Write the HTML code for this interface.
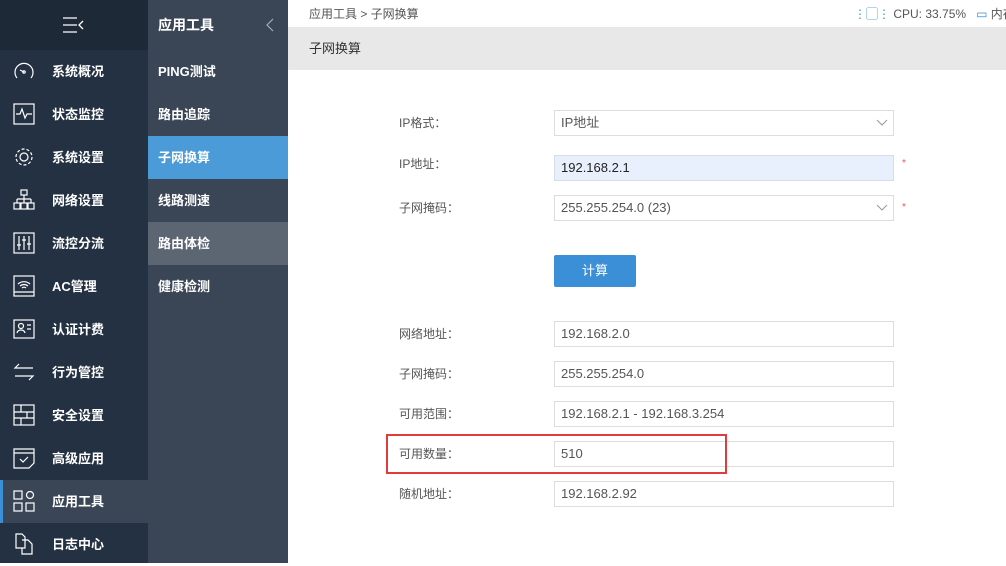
<!DOCTYPE html>
<html><head><meta charset="utf-8"><style>
*{margin:0;padding:0;box-sizing:border-box}
body{width:1006px;height:563px;overflow:hidden;position:relative;background:#fff;font-family:"Liberation Sans","Noto Sans CJK SC",sans-serif;font-size:13px}
.s1{position:absolute;left:0;top:0;width:148px;height:563px;background:#243142}
.s1top{position:absolute;left:0;top:0;width:148px;height:50px;background:#1e2937}
.mi{position:absolute;left:0;width:148px;height:43px;color:#fff;font-size:13px;font-weight:bold}
.mi span{position:absolute;left:52px;top:11px}
.mi svg{position:absolute;left:13px;top:10px}
.s2{position:absolute;left:148px;top:0;width:140px;height:563px;background:#3a4656}
.si{position:absolute;left:0;width:140px;height:43px;color:#fff;font-weight:bold;font-size:13px;padding:11px 0 0 10px}
.main{position:absolute;left:288px;top:0;right:0;bottom:0}
.lab{position:absolute;left:111px;color:#555;font-size:12px}
.inp{position:absolute;left:266px;width:340px;height:26px;border:1px solid #ddd;background:#fff;padding:0 6px;line-height:24px;color:#555;font-size:13px}
.star{position:absolute;left:614px;color:#e55;font-size:10px}
</style></head><body>
<div class="s1"></div><div class="s1top"></div>
<svg style="position:absolute;left:62px;top:16px" width="24" height="18" viewBox="0 0 24 18" fill="none" stroke="#fff" stroke-width="1.3"><path d="M1 2h14M1 9h14M1 16h14M21 5l-4 4 4 4"/></svg>
<div class="mi" style="top:50px"><svg width="22" height="22" viewBox="0 0 22 22" fill="none" stroke="#fff" stroke-width="1.2"><path d="M4 18A9 9 0 1 1 18 18"/><circle cx="11" cy="12" r="1.2"/><path d="M11 12l-4-2"/></svg><span>系统概况</span></div>
<div class="mi" style="top:93px"><svg width="22" height="22" viewBox="0 0 22 22" fill="none" stroke="#fff" stroke-width="1.2"><rect x="1" y="1" width="20" height="20"/><path d="M3 11h4l2-5 3 9 2-4h5"/></svg><span>状态监控</span></div>
<div class="mi" style="top:136px"><svg width="22" height="22" viewBox="0 0 22 22" fill="none" stroke="#fff" stroke-width="1.2"><circle cx="11" cy="11" r="4"/><circle cx="11" cy="11" r="8" stroke-dasharray="3 2"/></svg><span>系统设置</span></div>
<div class="mi" style="top:179px"><svg width="22" height="22" viewBox="0 0 22 22" fill="none" stroke="#fff" stroke-width="1.2"><rect x="8" y="1" width="6" height="5"/><path d="M11 6v4M4 10h14M4 10v4M11 10v4M18 10v4"/><rect x="1" y="14" width="6" height="6"/><rect x="8" y="14" width="6" height="6"/><rect x="15" y="14" width="6" height="6"/></svg><span>网络设置</span></div>
<div class="mi" style="top:222px"><svg width="22" height="22" viewBox="0 0 22 22" fill="none" stroke="#fff" stroke-width="1.2"><rect x="1" y="1" width="20" height="20"/><path d="M6 4v14M11 4v14M16 4v14M4 13h4M9 8h4M14 12h4"/></svg><span>流控分流</span></div>
<div class="mi" style="top:265px"><svg width="22" height="22" viewBox="0 0 22 22" fill="none" stroke="#fff" stroke-width="1.2"><rect x="1" y="1" width="20" height="20"/><path d="M5 9a9 9 0 0 1 12 0M7 11a6 6 0 0 1 8 0M9 13a3 3 0 0 1 4 0M1 17h20"/></svg><span>AC管理</span></div>
<div class="mi" style="top:308px"><svg width="22" height="22" viewBox="0 0 22 22" fill="none" stroke="#fff" stroke-width="1.2"><rect x="1" y="2" width="20" height="18"/><circle cx="8" cy="8" r="2.5"/><path d="M4 15c1-4 7-4 8 0M14 7h4M14 11h4"/></svg><span>认证计费</span></div>
<div class="mi" style="top:351px"><svg width="22" height="22" viewBox="0 0 22 22" fill="none" stroke="#fff" stroke-width="1.2"><path d="M6 3L2 7h18M16 19l4-4H2"/></svg><span>行为管控</span></div>
<div class="mi" style="top:394px"><svg width="22" height="22" viewBox="0 0 22 22" fill="none" stroke="#fff" stroke-width="1.2"><rect x="1" y="1" width="20" height="20"/><path d="M1 8h20M1 14h20M8 1v7M14 8v6M8 14v7"/></svg><span>安全设置</span></div>
<div class="mi" style="top:437px"><svg width="22" height="22" viewBox="0 0 22 22" fill="none" stroke="#fff" stroke-width="1.2"><path d="M1 2h20v14l-5 5H1zM1 6h20M7 12l3 3 5-5"/></svg><span>高级应用</span></div>
<div class="mi" style="top:480px;background:#3a4656;border-left:3px solid #3b8fd6"><svg style="left:10px" width="22" height="22" viewBox="0 0 22 22" fill="none" stroke="#fff" stroke-width="1.2"><rect x="1" y="1" width="8" height="8"/><rect x="1" y="13" width="8" height="8"/><rect x="13" y="13" width="8" height="8"/><circle cx="17" cy="5" r="3.5"/></svg><span style="left:49px">应用工具</span></div>
<div class="mi" style="top:523px"><svg width="22" height="22" viewBox="0 0 22 22" fill="none" stroke="#fff" stroke-width="1.2"><path d="M3 1h6l3 3v11H3zM9 7h6l4 4v10H9v-6"/></svg><span>日志中心</span></div>

<div class="s2"></div>
<div style="position:absolute;left:158px;top:15px;color:#fff;font-size:14px;font-weight:bold">应用工具</div>
<svg style="position:absolute;left:266px;top:18px" width="8" height="14" viewBox="0 0 8 14" fill="none" stroke="#aab" stroke-width="1.2"><path d="M7 1L1 7l6 6"/></svg>
<div style="position:absolute;left:148px;top:0">
<div class="si" style="top:50px">PING测试</div>
<div class="si" style="top:93px">路由追踪</div>
<div class="si" style="top:136px;background:#4a9bd8">子网换算</div>
<div class="si" style="top:179px">线路测速</div>
<div class="si" style="top:222px;background:#5c6672">路由体检</div>
<div class="si" style="top:265px">健康检测</div>
</div>

<div class="main">
<div style="position:absolute;left:21px;top:5px;color:#555;font-size:12px">应用工具 &gt; 子网换算</div>
<div style="position:absolute;left:566px;top:5px;color:#555;font-size:12px;white-space:nowrap"><span style="color:#3b8fd6">⋮▢⋮</span> CPU: 33.75% &nbsp;&nbsp;<span style="color:#3b8fd6">▭</span> 内存</div>
<div style="position:absolute;left:0;top:27px;width:718px;height:43px;background:#e8e8e8;color:#333;font-size:13px;padding:11px 0 0 21px">子网换算</div>

<div class="lab" style="top:114px">IP格式：</div>
<div class="inp" style="top:110px">IP地址<svg style="position:absolute;right:5px;top:8px" width="12" height="8" viewBox="0 0 12 8" fill="none" stroke="#999"><path d="M1 1l5 5 5-5"/></svg></div>
<div class="lab" style="top:155px">IP地址：</div>
<div class="inp" style="top:155px;background:#e8f0fe;border-color:#d8dde5;color:#222">192.168.2.1</div>
<div class="star" style="top:158px">*</div>
<div class="lab" style="top:199px">子网掩码：</div>
<div class="inp" style="top:195px">255.255.254.0 (23)<svg style="position:absolute;right:5px;top:8px" width="12" height="8" viewBox="0 0 12 8" fill="none" stroke="#999"><path d="M1 1l5 5 5-5"/></svg></div>
<div class="star" style="top:202px">*</div>
<div style="position:absolute;left:266px;top:255px;width:82px;height:32px;background:#3b8fd6;border-radius:2px;color:#fff;text-align:center;line-height:31px;font-size:13px">计算</div>

<div class="lab" style="top:325px">网络地址：</div><div class="inp" style="top:321px">192.168.2.0</div>
<div class="lab" style="top:365px">子网掩码：</div><div class="inp" style="top:361px">255.255.254.0</div>
<div class="lab" style="top:405px">可用范围：</div><div class="inp" style="top:401px">192.168.2.1 - 192.168.3.254</div>
<div class="lab" style="top:445px">可用数量：</div><div class="inp" style="top:441px">510</div>
<div class="lab" style="top:485px">随机地址：</div><div class="inp" style="top:481px">192.168.2.92</div>
<div style="position:absolute;left:98px;top:434px;width:341px;height:40px;border:2px solid #e03c3c"></div>
</div>
</body></html>
